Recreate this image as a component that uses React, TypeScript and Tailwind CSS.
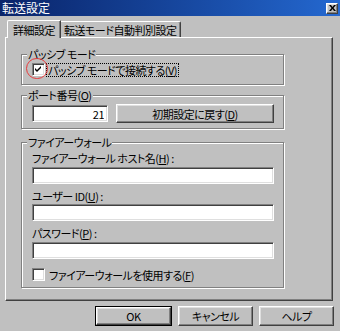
import React from 'react';

const font = 'font-["Noto_Sans_CJK_JP","Noto_Sans",sans-serif] [font-feature-settings:"palt"] tracking-[-0.5px]';

const sunken =
  'border border-t-[#808080] border-l-[#808080] border-r-white border-b-white shadow-[inset_1px_1px_0_#404040,inset_-1px_-1px_0_#dfdfdf]';

const raised =
  'border border-t-white border-l-white border-r-[#404040] border-b-[#404040] shadow-[inset_-1px_-1px_0_#808080,inset_1px_1px_0_#dfdfdf]';

const Key: React.FC<{ k: string }> = ({ k }) => (
  <>
    (<span className="underline underline-offset-1">{k}</span>)
  </>
);

const Checkbox: React.FC<{ checked?: boolean }> = ({ checked }) => (
  <span className={`inline-flex w-[13px] h-[13px] bg-white items-center justify-center shrink-0 ${sunken}`}>
    {checked && (
      <svg width="7" height="7" viewBox="0 0 7 7">
        <path d="M0 2 L2 4 L6 0 L6 2 L2 6 L0 4 Z" fill="#000" />
      </svg>
    )}
  </span>
);

const TextBox: React.FC<{ value?: string; className?: string }> = ({ value = '', className = '' }) => (
  <input
    readOnly
    value={value}
    className={`h-[17px] bg-white px-[3px] text-[11px] outline-none ${font} ${sunken} ${className}`}
  />
);

const Button: React.FC<{ label: React.ReactNode; className?: string; isDefault?: boolean }> = ({
  label,
  className = '',
  isDefault,
}) => {
  const inner = (
    <button className={`w-full h-full flex items-center justify-center bg-[#c0c0c0] ${raised}`}>{label}</button>
  );
  if (isDefault) return <div className={`border border-black ${className}`}>{inner}</div>;
  return <div className={className}>{inner}</div>;
};

const Group: React.FC<{ title: React.ReactNode; className?: string; children: React.ReactNode }> = ({
  title,
  className = '',
  children,
}) => (
  <fieldset
    className={`w-[263px] border border-[#808080] shadow-[inset_1px_1px_0_#fff,1px_1px_0_#fff] ${className}`}
  >
    <legend className="ml-[5px] px-[1px] leading-[12px] bg-[#c0c0c0]">{title}</legend>
    {children}
  </fieldset>
);

export default function App() {
  return (
    <div className={`relative w-[340px] h-[331px] overflow-hidden bg-[#c0c0c0] text-black text-[11px] leading-[12px] ${font}`}>
      {/* Title bar */}
      <div className="h-[16px] flex items-center justify-between bg-linear-to-r from-[#0a246a] to-[#2468d0] pl-[2px] pr-[2px]">
        <span className="text-white text-[12px] leading-[14px] tracking-normal">転送設定</span>
        <span className={`w-[12px] h-[11px] flex items-center justify-center bg-[#c0c0c0] ${raised}`}>
          <svg width="7" height="6" viewBox="0 0 7 6">
            <path d="M0 0 L2 0 L3.5 2 L5 0 L7 0 L4.5 3 L7 6 L5 6 L3.5 4 L2 6 L0 6 L2.5 3 Z" fill="#000" />
          </svg>
        </span>
      </div>

      {/* Tabs */}
      <div className="flex items-end pl-[7px] mt-[4px]">
        <div className="relative z-10 -mb-px h-[18px] px-[5px] flex items-center bg-[#c0c0c0] border-t border-l border-t-white border-l-white rounded-tl-[2px] border-r border-r-[#404040] shadow-[inset_-1px_0_0_#808080]">
          詳細設定
        </div>
        <div className="h-[16px] px-[3px] flex items-center border-t border-t-white border-r border-r-[#404040] shadow-[inset_-1px_0_0_#808080] rounded-tr-[2px]">
          転送モード自動判別設定
        </div>
      </div>

      {/* Tab panel */}
      <div className="mx-[5px] w-[328px] h-[264px] pl-[15px] pt-[10px] border border-t-white border-l-white border-r-[#404040] border-b-[#404040] shadow-[inset_-1px_-1px_0_#808080]">
        <Group title="パッシブ モード">
          <div className="relative flex items-center h-[13px] mt-[3px] mb-[8px] pl-[10px]">
            <Checkbox checked />
            <span className="ml-[2px] px-[1px] outline-1 outline-dotted outline-black">
              パッシブ モードで接続する<Key k="V" />
            </span>
            <span className="absolute left-[4px] top-[-5px] w-[22px] h-[21px] rounded-full border-[1.5px] border-[#e8393a]" />
          </div>
        </Group>

        <Group title={<>ポート番号<Key k="O" /></>} className="mt-[4px]">
          <div className="flex items-center gap-[8px] mt-[3px] mb-[5px] pl-[10px]">
            <TextBox value="21" className="w-[76px] text-right" />
            <Button label={<>初期設定に戻す<Key k="D" /></>} className="w-[158px] h-[19px]" />
          </div>
        </Group>

        <Group title="ファイアーウォール" className="mt-[7px]">
          <div className="flex flex-col pl-[10px] pt-[4px] pb-[6px]">
            <span>ファイアーウォール ホスト名<Key k="H" /> :</span>
            <TextBox className="w-[242px] mt-[3px]" />
            <span className="mt-[6px]">ユーザー ID<Key k="U" /> :</span>
            <TextBox className="w-[242px] mt-[2px]" />
            <span className="mt-[6px]">パスワード<Key k="P" /> :</span>
            <TextBox className="w-[242px] mt-[3px]" />
            <div className="flex items-center h-[13px] mt-[9px]">
              <Checkbox />
              <span className="ml-[4px]">
                ファイアーウォールを使用する<Key k="F" />
              </span>
            </div>
          </div>
        </Group>
      </div>

      {/* Dialog buttons */}
      <div className="flex justify-end gap-[6px] pr-[6px] mt-[5px]">
        <Button label="OK" isDefault className="w-[77px] h-[20px]" />
        <Button label="キャンセル" className="w-[75px] h-[20px]" />
        <Button label="ヘルプ" className="w-[75px] h-[20px]" />
      </div>
    </div>
  );
}
